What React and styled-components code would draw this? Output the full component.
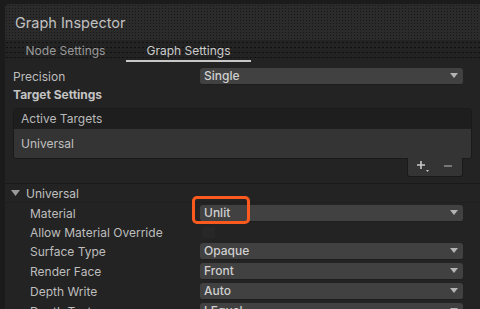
import styled, { createGlobalStyle } from 'styled-components';

const GlobalStyle = createGlobalStyle`
  body {
    margin: 0;
    background: #1b1b1b;
    font-family: Inter, "Noto Sans", sans-serif;
    overflow: hidden;
  }
`;

const dots = `radial-gradient(circle, rgba(0,0,0,0.5) 0.6px, transparent 0.9px)`;

const rows = [
  { label: 'Material', value: 'Unlit', highlight: true },
  { label: 'Allow Material Override', check: true },
  { label: 'Surface Type', value: 'Opaque' },
  { label: 'Render Face', value: 'Front' },
  { label: 'Depth Write', value: 'Auto' },
  { label: 'Depth Test', value: 'LEqual' },
];

const Arrow = () => (
  <svg width="8" height="5" viewBox="0 0 8 5">
    <path d="M0 0h8L4 5z" fill="#b4b4b4" />
  </svg>
);

const Dropdown = ({ value, highlight }) => (
  <Select>
    <span>{value}</span>
    <Arrow />
    {highlight && <Highlight />}
  </Select>
);

const App = () => {
  return (
    <>
      <GlobalStyle />
      <Panel>
        <Header>Graph Inspector</Header>
        <TabBar>
          <Tab $width={121}>Node Settings</Tab>
          <Tab $width={125} $active>Graph Settings</Tab>
        </TabBar>
        <Content>
          <Row>
            <Label>Precision</Label>
            <Dropdown value="Single" />
          </Row>
          <Section>Target Settings</Section>
          <List>
            <ListHeader>Active Targets</ListHeader>
            <ListItem>Universal</ListItem>
          </List>
          <ListFooter>
            <svg width="14" height="14" viewBox="0 0 14 14">
              <path d="M4 1v8M0 5h8" stroke="#c8c8c8" strokeWidth="1.6" />
              <path d="M9 10h3l-1.5 2z" fill="#c8c8c8" />
            </svg>
            <svg width="10" height="14" viewBox="0 0 10 14">
              <path d="M1 6h8" stroke="#8c8c8c" strokeWidth="1.6" />
            </svg>
          </ListFooter>
        </Content>
        <Foldout>
          <FoldoutHeader>
            <svg width="9" height="6" viewBox="0 0 9 6">
              <path d="M0 0h9L4.5 6z" fill="#9a9a9a" />
            </svg>
            Universal
          </FoldoutHeader>
          {rows.map((row) => (
            <Row key={row.label} $indent $short={row.check}>
              <Label>{row.label}</Label>
              {row.check ? <Check /> : <Dropdown value={row.value} highlight={row.highlight} />}
            </Row>
          ))}
        </Foldout>
      </Panel>
    </>
  );
};

export default App;

const Panel = styled.div`
  margin: 4px 0 0 5px;
  height: 305px;
  background: #232323;
  border-top-left-radius: 4px;
  overflow: hidden;
`;

const Header = styled.div`
  height: 36px;
  display: flex;
  align-items: center;
  padding-left: 10px;
  padding-top: 1px;
  box-sizing: border-box;
  background-color: #2b2b2b;
  background-image: ${dots};
  background-size: 3px 3px;
  color: #c2c2c2;
  font-size: 14.5px;
`;

const TabBar = styled.div`
  height: 22px;
  display: flex;
  background-color: #232323;
  background-image: ${dots};
  background-size: 4px 5px;
`;

const Tab = styled.div`
  width: ${(p) => p.$width}px;
  display: flex;
  align-items: center;
  justify-content: center;
  font-size: 12px;
  color: ${(p) => (p.$active ? '#cccccc' : '#9a9a9a')};
  border-bottom: 2px solid ${(p) => (p.$active ? '#c8c8c8' : 'transparent')};
  box-sizing: border-box;
`;

const Content = styled.div`
  padding: 4px 8px 6px 8px;
`;

const Row = styled.div`
  height: ${(p) => (p.$short ? 18 : 20)}px;
  display: grid;
  grid-template-columns: ${(p) => (p.$indent ? 170 : 187)}px 1fr;
  align-items: center;
  padding-left: ${(p) => (p.$indent ? 25 : 0)}px;
  padding-right: ${(p) => (p.$indent ? 17 : 9)}px;
`;

const Label = styled.div`
  font-size: 12px;
  color: #bebebe;
  white-space: nowrap;
`;

const Section = styled.div`
  height: 16px;
  display: flex;
  align-items: center;
  font-size: 12px;
  font-weight: 700;
  color: #c4c4c4;
`;

const Select = styled.div`
  position: relative;
  height: 16px;
  display: flex;
  align-items: center;
  justify-content: space-between;
  padding: 0 5px 0 4px;
  background: #414141;
  border-bottom: 1px solid #1e1e1e;
  border-radius: 3px;
  font-size: 12px;
  font-weight: 500;
  color: #d0d0d0;
`;

const Highlight = styled.div`
  position: absolute;
  left: -8px;
  top: -9px;
  width: 58px;
  height: 28px;
  box-sizing: border-box;
  border: 3px solid #fb5a1e;
  border-radius: 5px;
`;

const Check = styled.div`
  width: 13px;
  height: 11px;
  margin-left: 2px;
  background-color: #3a3a3a;
  background-image: ${dots};
  background-size: 2px 2px;
  border-radius: 2px;
`;

const List = styled.div`
  margin-top: 6px;
  border: 1px solid #1a1a1a;
  border-radius: 3px;
  overflow: hidden;
`;

const ListHeader = styled.div`
  height: 19px;
  display: flex;
  align-items: center;
  padding-left: 7px;
  background-color: #2c2c2c;
  background-image: ${dots};
  background-size: 2px 2px;
  border-bottom: 1px solid #1f1f1f;
  font-size: 12px;
  color: #bababa;
`;

const ListItem = styled.div`
  height: 29px;
  display: flex;
  align-items: center;
  padding-left: 7px;
  background: #343434;
  font-size: 12px;
  color: #c0c0c0;
`;

const ListFooter = styled.div`
  width: 56px;
  height: 19px;
  margin: -1px 9px 0 auto;
  display: flex;
  align-items: center;
  justify-content: center;
  gap: 12px;
  background: #343434;
  border: 1px solid #1a1a1a;
  border-top: none;
  border-radius: 0 0 3px 3px;
  box-sizing: border-box;
`;

const Foldout = styled.div`
  border-top: 1px solid #191919;
`;

const FoldoutHeader = styled.div`
  height: 18px;
  display: flex;
  align-items: center;
  gap: 6px;
  padding-left: 6px;
  border-bottom: 1px dotted #1c1c1c;
  font-size: 12px;
  color: #c0c0c0;
`;
